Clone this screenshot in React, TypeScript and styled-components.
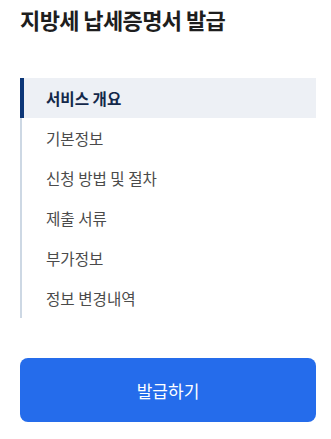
import React from "react";
import styled, { createGlobalStyle } from "styled-components";

const GlobalStyle = createGlobalStyle`
  html, body { margin: 0; padding: 0; background: #ffffff; }
  body { font-family: "Noto Sans CJK KR", "Noto Sans", sans-serif; }
  * { box-sizing: border-box; }
`;

const Page = styled.div`
  width: 331px;
  padding: 4px 15px 0 20px;
  display: flex;
  flex-direction: column;
`;

const Title = styled.h1`
  margin: 0;
  font-size: 22px;
  line-height: 30px;
  font-weight: 700;
  color: #1e1e1e;
  letter-spacing: -0.6px;
`;

const Nav = styled.nav`
  margin-top: 44px;
  display: flex;
  flex-direction: column;
`;

const NavItem = styled.a<{ $active?: boolean }>`
  display: flex;
  align-items: center;
  height: 40px;
  font-size: 15.6px;
  text-decoration: none;
  cursor: pointer;
  border-left: ${(p) => (p.$active ? "4px solid #0c3677" : "2px solid #cdd8e4")};
  padding-left: ${(p) => (p.$active ? "22px" : "24px")};
  background: ${(p) => (p.$active ? "#edf0f5" : "transparent")};
  color: ${(p) => (p.$active ? "#14284a" : "#4b4b4b")};
  font-weight: ${(p) => (p.$active ? 700 : 400)};
`;

const IssueButton = styled.button`
  margin-top: 40px;
  height: 64px;
  width: 296px;
  border: none;
  border-radius: 8px;
  background: #256ceb;
  color: #ffffff;
  font-family: inherit;
  font-size: 17px;
  font-weight: 400;
  cursor: pointer;
`;

const items = ["서비스 개요", "기본정보", "신청 방법 및 절차", "제출 서류", "부가정보", "정보 변경내역"];

export default function App() {
  return (
    <>
      <GlobalStyle />
      <Page>
        <Title>지방세 납세증명서 발급</Title>
        <Nav>
          {items.map((t, i) => (
            <NavItem key={t} $active={i === 0}>
              {t}
            </NavItem>
          ))}
        </Nav>
        <IssueButton>발급하기</IssueButton>
      </Page>
    </>
  );
}
